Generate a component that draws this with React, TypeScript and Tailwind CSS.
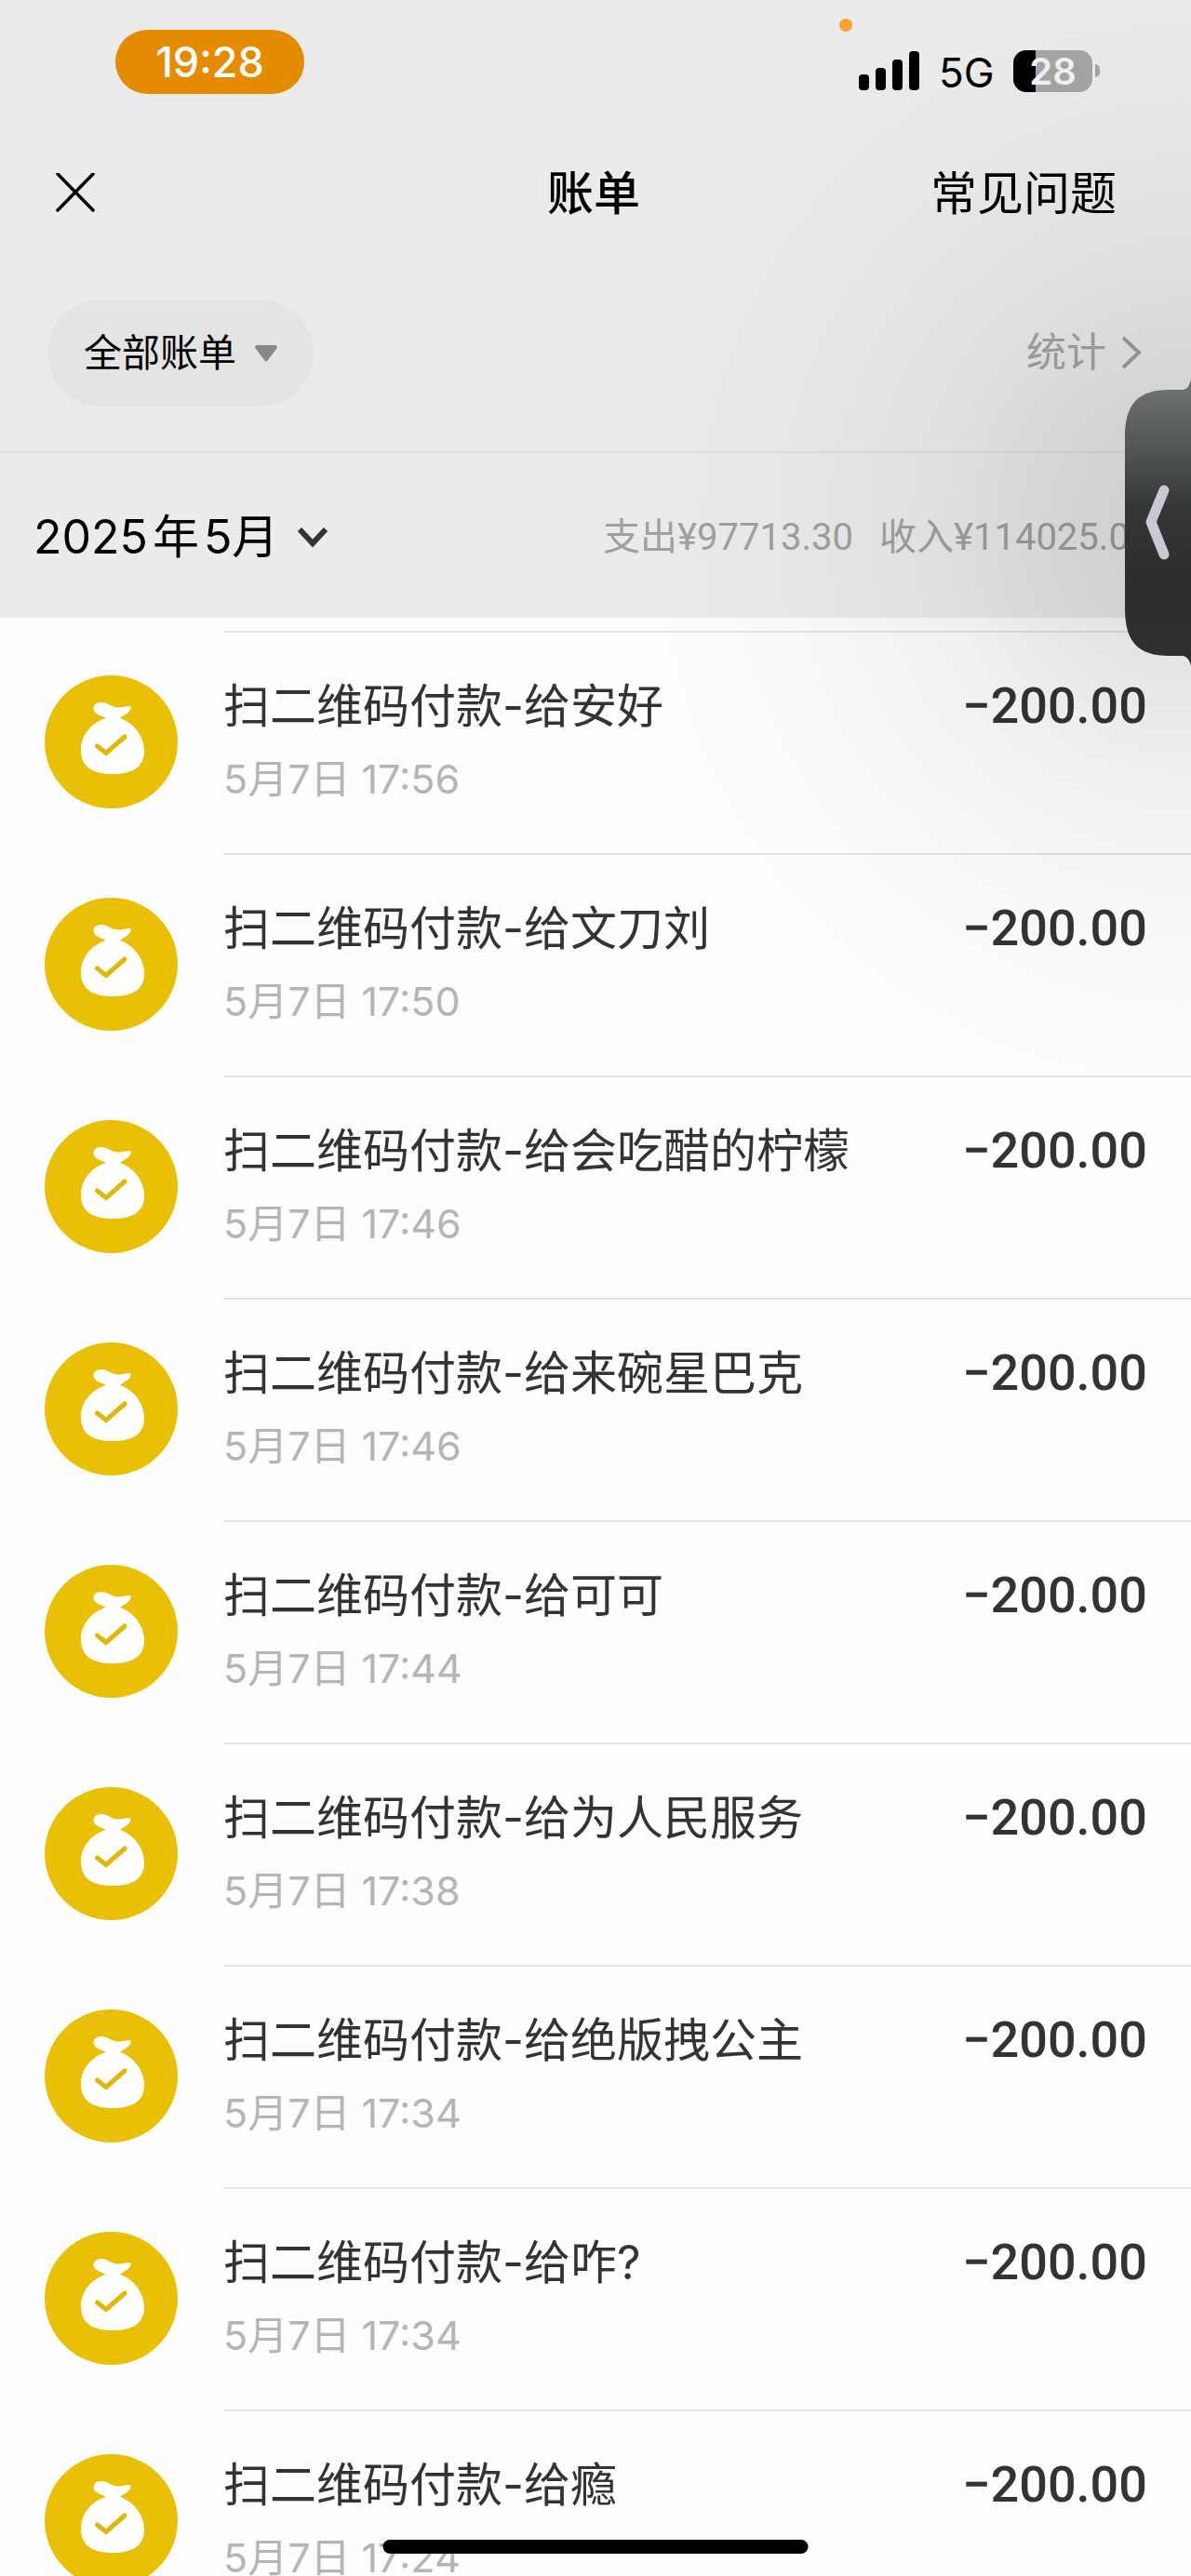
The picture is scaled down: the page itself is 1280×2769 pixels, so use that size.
const records = [
  { name: "安好", time: "17:56" },
  { name: "文刀刘", time: "17:50" },
  { name: "会吃醋的柠檬", time: "17:46" },
  { name: "来碗星巴克", time: "17:46" },
  { name: "可可", time: "17:44" },
  { name: "为人民服务", time: "17:38" },
  { name: "绝版拽公主", time: "17:34" },
  { name: "咋?", time: "17:34" },
  { name: "瘾", time: "17:24" },
];

function BagIcon() {
  return (
    <svg viewBox="0 0 143 143" className="size-[143px] shrink-0" aria-hidden="true">
      <circle cx="71.5" cy="71.5" r="71.5" fill="#eac006" />
      <path
        fill="#fff"
        d="M66 46 C61 43 55 42 53 38 C51 33 55 29 61 29 C67 29 71 34 78 34.500 C83 35 87 33 91 33 C93 33 93 35 92 37 C89 42 84 43 81 46 C96 51 107 66 107 81 C107 99 94 106 73 106 C51 106 39 98 39 80 C39 64 51 50 66 46 Z"
      />
      <path
        d="M56.500 76 L66 83.500 L86 66"
        fill="none"
        stroke="#e0b70a"
        strokeWidth="5"
        strokeLinecap="round"
      />
    </svg>
  );
}

function StatusBar() {
  return (
    <div className="relative flex items-start justify-between pt-8 pl-[124px] pr-[98px] h-[132px]">
      <div className="w-[203px] h-[69px] rounded-full bg-[#e68a00] text-white text-[45px] font-medium flex items-center justify-center">
        19:28
      </div>
      <div className="absolute top-5 left-[902px] size-[14px] rounded-full bg-[#f7a52e]" />
      <div className="flex items-center mt-5 h-12">
        <svg viewBox="0 0 66 42" className="w-[66px] h-[42px]" aria-hidden="true">
          <rect x="0" y="25" width="11" height="17" rx="4" />
          <rect x="18" y="18" width="11" height="24" rx="4" />
          <rect x="36" y="9" width="11" height="33" rx="4" />
          <rect x="54" y="0" width="11" height="42" rx="4" />
        </svg>
        <span className="ml-5 pt-1 text-[44px] leading-[48px] w-[60px]">5G</span>
        <div className="ml-5 w-[85px] h-[45px] rounded-[14px] bg-[linear-gradient(to_right,#000_24px,#a5a5a5_24px)] text-[#f2f2f2] text-[40px] font-semibold leading-[45px] text-center">
          28
        </div>
        <div className="ml-[3px] w-[5px] h-[14px] rounded-r-full bg-[#a5a5a5]" />
      </div>
    </div>
  );
}

export default function App() {
  return (
    <div className="relative h-screen flex flex-col overflow-hidden bg-[#fdfdfd] text-black font-['Inter','Noto_Sans_CJK_SC',sans-serif]">
      <header className="shrink-0 bg-[#ebebeb]">
        <StatusBar />

        <div className="grid grid-cols-[1fr_auto_1fr] items-center h-[150px] pl-[60px] pr-20">
          <button aria-label="关闭" className="justify-self-start">
            <svg viewBox="0 0 42 42" className="size-[42px]" aria-hidden="true">
              <path d="M2 1 L40 40 M40 1 L2 40" stroke="#000" strokeWidth="3.500" strokeLinecap="round" />
            </svg>
          </button>
          <h1 className="pl-4 pt-0.5 text-[50px] font-medium">账单</h1>
          <a href="#faq" className="justify-self-end pt-0.5 text-[50px]">
            常见问题
          </a>
        </div>

        <div className="flex items-start justify-between h-[203px] pt-10 pl-[51px] pr-[53px]">
          <button className="flex items-center gap-5 h-[115px] w-[286px] pl-[39px] rounded-full bg-[#e4e4e4] text-[41px]">
            全部账单
            <svg viewBox="0 0 24 18" className="w-6 h-[18px]" aria-hidden="true">
              <path d="M2 0 H22 Q25 1 23 4 L14 16 Q12 19 10 16 L1 4 Q-1 1 2 0 Z" fill="#888" />
            </svg>
          </button>
          <a href="#stats" className="flex items-center gap-4 h-[113px] text-[43px] text-[#a3a3a3]">
            统计
            <svg viewBox="0 0 22 36" className="w-[22px] h-9" aria-hidden="true">
              <path d="M2 2 L19 18 L2 34" fill="none" stroke="#9f9f9f" strokeWidth="4" />
            </svg>
          </a>
        </div>

        <div className="flex items-center justify-between h-[179px] pl-9 border-t-2 border-[#e0e0e0]">
          <button className="flex items-center gap-5 pt-1 text-[50px]">
            <span className="flex gap-[5px]">
              <span>2025</span>
              <span>年</span>
              <span>5月</span>
            </span>
            <svg viewBox="0 0 34 24" className="w-[34px] h-6" aria-hidden="true">
              <path d="M3 3 L17 18 L31 3" fill="none" stroke="#333" strokeWidth="6" />
            </svg>
          </button>
          <p className="flex gap-7 pt-1 whitespace-nowrap text-[40px] text-[#a0a0a0] font-['Roboto','Noto_Sans_CJK_SC',sans-serif] w-[632px]">
            <span>支出¥97713.30</span>
            <span>收入¥114025.00</span>
          </p>
        </div>
      </header>

      <main className="flex-1 min-h-0 overflow-hidden pt-[14px]">
        <ul>
          {records.map((record) => (
            <li key={record.name} className="flex h-[239px]">
              <div className="pl-12 pt-12">
                <BagIcon />
              </div>
              <div className="flex-1 flex justify-between ml-[49px] pr-[47px] pt-[49px] border-t-2 border-[#e4e4e4]">
                <div>
                  <h2 className="text-[50px] leading-[60px] text-[#333]">扫二维码付款-给{record.name}</h2>
                  <p className="mt-[18px] text-[43px] leading-[60px] text-[#b5b5b5]">5月7日 {record.time}</p>
                </div>
                <p className="text-[54px] leading-[60px] font-medium text-[#333] font-['Roboto',sans-serif]">
                  −200.00
                </p>
              </div>
            </li>
          ))}
        </ul>
      </main>

      {/* shade cast by the side handle */}
      <div className="pointer-events-none absolute right-0 top-0 w-[600px] h-[1180px] bg-[radial-gradient(ellipse_600px_620px_at_100%_48%,rgba(0,0,0,0.13),rgba(0,0,0,0.1)_20%,rgba(0,0,0,0.05)_45%,rgba(0,0,0,0.016)_75%,transparent)]" />

      <button aria-label="展开侧栏" className="absolute right-0 top-[404px]">
        <svg viewBox="0 0 71 316" className="w-[71px] h-[316px]" aria-hidden="true">
          <defs>
            <linearGradient id="handle" x1="0" y1="0" x2="0" y2="1">
              <stop offset="0.050" stopColor="#69706e" />
              <stop offset="0.250" stopColor="#505553" />
              <stop offset="0.450" stopColor="#343637" />
              <stop offset="0.700" stopColor="#2d2d2e" />
              <stop offset="1" stopColor="#322f2e" />
            </linearGradient>
          </defs>
          <path
            d="M71 3 Q69 15 62 15 H48 C14 15 0 30 0 66 V250 C0 286 14 301 48 301 H62 Q69 302 71 312 Z"
            fill="url(#handle)"
          />
          <path
            d="M42 123 L28 157 L42 192"
            fill="none"
            stroke="#c9c9d3"
            strokeWidth="11"
            strokeLinecap="round"
            strokeLinejoin="round"
          />
        </svg>
      </button>

      <div className="absolute bottom-6 left-1/2 -translate-x-1/2 w-[457px] h-[15px] rounded-full bg-black" />
    </div>
  );
}
